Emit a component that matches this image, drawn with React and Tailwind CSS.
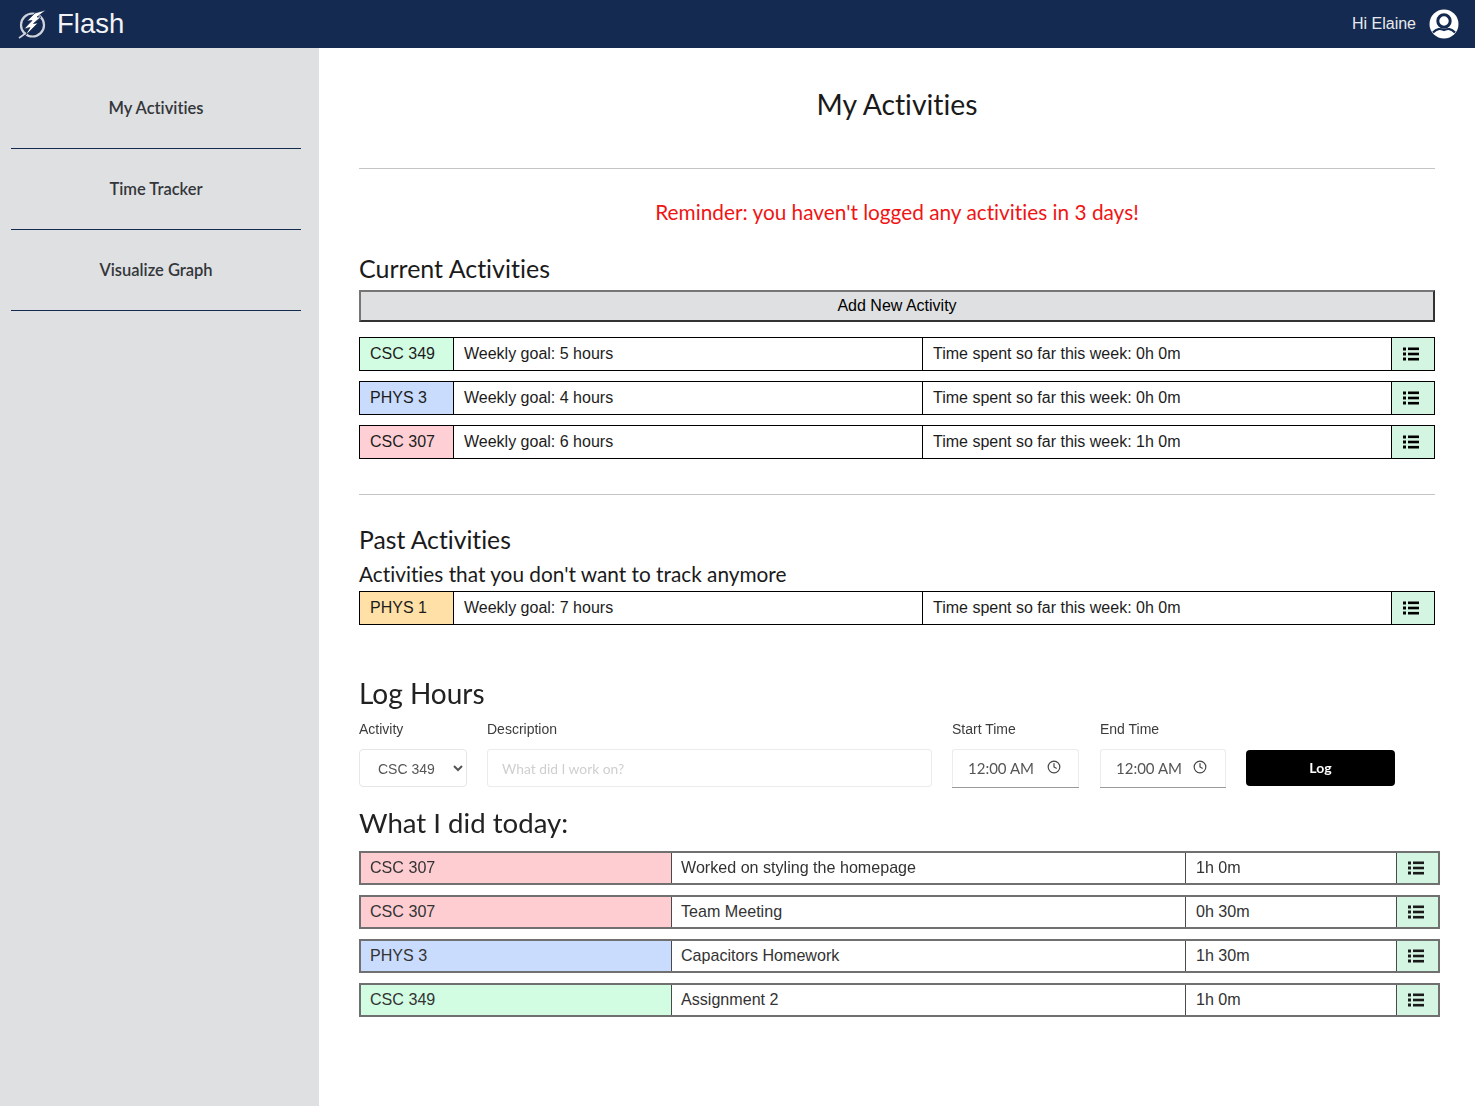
import React from "react";
import { Clock } from "lucide-react";

const lato = "font-['Lato','Noto_Sans',sans-serif] [font-variant-ligatures:none]";
const arial = "font-['Liberation_Sans',Arial,sans-serif]";

function Bolt() {
  return (
    <svg width="30" height="30" viewBox="0 0 30 30" className="shrink-0">
      <circle cx="15.5" cy="16" r="11.5" fill="none" stroke="#cfd3dc" strokeWidth="2.2" />
      <path d="M2 29 L9 24" stroke="#cfd3dc" strokeWidth="1.6" />
      <path d="M29 1 L18 4 L10 12 L15 11.5 L7 20 L13 18.5 L8 27 L21 14 L16.5 14.5 L24 8 L20 8 Z" fill="#ffffff" stroke="#152a50" strokeWidth="0.7" />
    </svg>
  );
}

function UserIcon() {
  return (
    <svg width="30" height="30" viewBox="0 0 30 30" className="shrink-0">
      <circle cx="15" cy="15" r="14.5" fill="#ffffff" />
      <circle cx="15" cy="12" r="6.2" fill="#ffffff" stroke="#152a50" strokeWidth="3" />
      <path d="M4 23.5 C8 19 11 19.6 15 21 C19 19.6 22 19 26 23.5" fill="none" stroke="#152a50" strokeWidth="2.2" />
    </svg>
  );
}

function ListIcon({ color }) {
  return (
    <svg width="16" height="14" viewBox="0 0 16 14" className="shrink-0" fill={color}>
      <rect x="0" y="0.5" width="3" height="3" />
      <rect x="5" y="0.5" width="11" height="2.6" />
      <rect x="0" y="5.5" width="3" height="3" />
      <rect x="5" y="5.7" width="11" height="2.6" />
      <rect x="0" y="10.5" width="3" height="3" />
      <rect x="5" y="10.9" width="11" height="2.6" />
    </svg>
  );
}

function NavItem({ label }) {
  return (
    <div className="h-[81px] mx-[11px] w-[290px] flex items-center justify-center border-b border-[#152a50]">
      <span className={`${lato} text-[16.5px] font-semibold text-[#33363a]`}>{label}</span>
    </div>
  );
}

function ActivityRow({ name, color, goal, spent }) {
  return (
    <div className={`${arial} flex w-[1076px] h-[34px] border border-black text-[16px] text-[#1c1c1c]`}>
      <div className={`w-[94px] pl-[10px] flex items-center border-r border-black ${color}`}>{name}</div>
      <div className="w-[469px] pl-[10px] flex items-center border-r border-black bg-white">Weekly goal: {goal} hours</div>
      <div className="w-[469px] pl-[10px] flex items-center border-r border-black bg-white">Time spent so far this week: {spent}</div>
      <div className="flex-1 flex items-center justify-center pr-[4px] bg-[#d4f5e2]">
        <ListIcon color="#000000" />
      </div>
    </div>
  );
}

function TodayRow({ name, color, desc, time }) {
  return (
    <div className={`${arial} flex w-[1081px] h-[34px] border-2 border-[#707070] text-[16.1px] text-[#333333]`}>
      <div className={`w-[311px] pl-[9px] pb-[1px] flex items-center border-r border-[#4a4a4a] ${color}`}>{name}</div>
      <div className="w-[514px] pl-[9px] pb-[1px] flex items-center border-r border-[#4a4a4a] bg-white">{desc}</div>
      <div className="w-[211px] pl-[10px] pb-[1px] flex items-center border-r border-[#4a4a4a] bg-white">{time}</div>
      <div className="flex-1 flex items-center justify-center pr-[4px] bg-[#d4f5e2]">
        <ListIcon color="#1a1a1a" />
      </div>
    </div>
  );
}

function TimeField({ width, label, clockGap }) {
  return (
    <div className={`${width} flex flex-col shrink-0`}>
      <label className={`${arial} h-[20px] flex items-center text-[14px] text-[#3c3c3c]`}>{label}</label>
      <div className={`${lato} mt-[10px] h-[38px] pl-[15px] flex items-center rounded-t-[3px] border border-[#ececec] border-b-transparent shadow-[0_1px_0_#9a9a9a] text-[15px] text-[#555555] bg-white`}>
        <span className="mt-[1px]">12:00 AM</span>
        <Clock className={`${clockGap} w-[14px] h-[14px] text-[#444444] -mt-[2px]`} strokeWidth={2} />
      </div>
    </div>
  );
}

export default function App() {
  return (
    <div className="w-[1475px] h-[1106px] flex flex-col overflow-hidden bg-white">
      <header className="h-[48px] shrink-0 bg-[#152a50] flex items-center justify-between pl-[17px] pr-[16px]">
        <div className="flex items-center gap-[10px]">
          <Bolt />
          <span className={`${arial} text-[27.5px] text-[#f2f3f6]`}>Flash</span>
        </div>
        <div className="flex items-center gap-[13px]">
          <span className={`${arial} text-[16px] text-[#e8eaef]`}>Hi Elaine</span>
          <UserIcon />
        </div>
      </header>
      <div className="flex flex-1 min-h-0">
        <aside className="w-[319px] shrink-0 bg-[#dfe0e2] pt-[20px]">
          <NavItem label="My Activities" />
          <NavItem label="Time Tracker" />
          <NavItem label="Visualize Graph" />
        </aside>
        <main className="flex-1 pl-[40px] min-w-0">
          <div className="w-[1076px]">
            <div className={`${lato} h-[112px] flex items-center justify-center text-[28.3px] text-[#1a1a1a]`}>My Activities</div>
            <hr className="mt-[8px] border-t border-[#c4c4c4]" />
            <div className={`${lato} h-[86px] flex items-center justify-center text-[20.8px] text-[#f01414]`}>Reminder: you haven't logged any activities in 3 days!</div>
            <h2 className={`${lato} h-[28px] flex items-center text-[25px] text-[#1a1a1a]`}>Current Activities</h2>
            <button className={`${arial} block w-full mt-[7px] h-[32px] bg-[#dfe0e2] border-2 border-t-[#767676] border-l-[#767676] border-r-[#333333] border-b-[#333333] text-[16px] text-black`}>Add New Activity</button>
            <div className="mt-[15px] flex flex-col gap-[10px]">
              <ActivityRow name="CSC 349" color="bg-[#d3fde3]" goal="5" spent="0h 0m" />
              <ActivityRow name="PHYS 3" color="bg-[#c9dcfd]" goal="4" spent="0h 0m" />
              <ActivityRow name="CSC 307" color="bg-[#fed0d5]" goal="6" spent="1h 0m" />
            </div>
            <hr className="mt-[35px] border-t border-[#c4c4c4]" />
            <h2 className={`${lato} mt-[30px] h-[30px] flex items-center text-[24.7px] text-[#1a1a1a]`}>Past Activities</h2>
            <p className={`${lato} mt-[4px] h-[30px] flex items-center text-[20.8px] text-[#1a1a1a]`}>Activities that you don't want to track anymore</p>
            <div className="mt-[2px]">
              <ActivityRow name="PHYS 1" color="bg-[#ffe0a6]" goal="7" spent="0h 0m" />
            </div>
            <div className="blur-[0.5px]">
              <h2 className={`${lato} mt-[50px] h-[36px] flex items-center text-[28px] text-[#222222]`}>Log Hours</h2>
              <div className="mt-[8px] flex items-start">
                <div className="w-[108px] shrink-0 flex flex-col">
                  <label className={`${arial} h-[20px] flex items-center text-[14px] text-[#3c3c3c]`}>Activity</label>
                  <select defaultValue="CSC 349" className={`${arial} mt-[10px] h-[38px] w-full pl-[14px] pr-[1px] pt-[1px] rounded-[4px] border border-[#e6e6e6] bg-white text-[14px] text-[#555555]`}>
                    <option>CSC 349</option>
                    <option>PHYS 3</option>
                    <option>CSC 307</option>
                  </select>
                </div>
                <div className="w-[445px] shrink-0 ml-[20px] flex flex-col">
                  <label className={`${arial} h-[20px] flex items-center text-[14px] text-[#3c3c3c]`}>Description</label>
                  <input placeholder="What did I work on?" className={`${lato} mt-[10px] h-[38px] w-full px-[14px] rounded-[3px] border border-[#ebebeb] bg-white text-[13.8px] placeholder:text-[#cfcfcf] outline-none`} />
                </div>
                <div className="ml-[20px]"><TimeField width="w-[127px]" label="Start Time" clockGap="ml-[13px]" /></div>
                <div className="ml-[21px]"><TimeField width="w-[126px]" label="End Time" clockGap="ml-[11px]" /></div>
                <button className={`${lato} ml-[20px] mt-[31px] w-[149px] h-[36px] pb-[2px] shrink-0 rounded-[4px] bg-black text-white text-[14px] font-bold`}>Log</button>
              </div>
              <h2 className={`${lato} mt-[18px] h-[36px] flex items-center text-[27.6px] text-[#222222]`}>What I did today:</h2>
              <div className="mt-[10px] flex flex-col gap-[10px]">
                <TodayRow name="CSC 307" color="bg-[#fdcdd2]" desc="Worked on styling the homepage" time="1h 0m" />
                <TodayRow name="CSC 307" color="bg-[#fdcdd2]" desc="Team Meeting" time="0h 30m" />
                <TodayRow name="PHYS 3" color="bg-[#c9dcfd]" desc="Capacitors Homework" time="1h 30m" />
                <TodayRow name="CSC 349" color="bg-[#d3fde3]" desc="Assignment 2" time="1h 0m" />
              </div>
            </div>
          </div>
        </main>
      </div>
    </div>
  );
}
